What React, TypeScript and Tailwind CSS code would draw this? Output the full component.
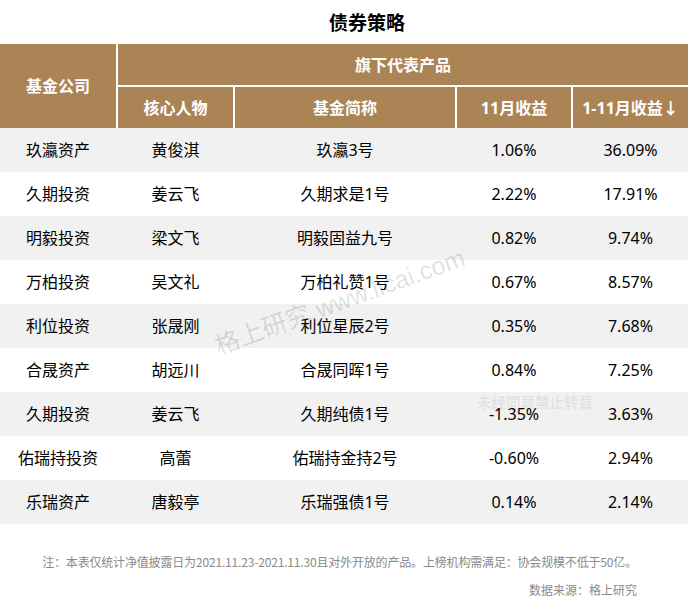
const rows = [
  ["玖瀛资产", "黄俊淇", "玖瀛3号", "1.06%", "36.09%"],
  ["久期投资", "姜云飞", "久期求是1号", "2.22%", "17.91%"],
  ["明毅投资", "梁文飞", "明毅固益九号", "0.82%", "9.74%"],
  ["万柏投资", "吴文礼", "万柏礼赞1号", "0.67%", "8.57%"],
  ["利位投资", "张晟刚", "利位星辰2号", "0.35%", "7.68%"],
  ["合晟资产", "胡远川", "合晟同晖1号", "0.84%", "7.25%"],
  ["久期投资", "姜云飞", "久期纯债1号", "-1.35%", "3.63%"],
  ["佑瑞持投资", "高蕾", "佑瑞持金持2号", "-0.60%", "2.94%"],
  ["乐瑞资产", "唐毅亭", "乐瑞强债1号", "0.14%", "2.14%"],
];

const cols = "grid grid-cols-[116px_115px_220px_114px_115px] gap-x-[2px]";

export default function App() {
  return (
    <div className="relative w-[690px] h-[613px] overflow-hidden bg-white text-black font-['Noto_Sans','Noto_Sans_CJK_SC',sans-serif]">
      <h1 className="flex h-[44px] items-center justify-center pl-[44px] text-[19px] font-bold font-['Noto_Sans_CJK_SC',sans-serif]">
        债券策略
      </h1>

      <div className="w-[688px]">
        {/* header */}
        <div className="grid grid-cols-[116px_115px_220px_114px_115px] grid-rows-[41px_41px] gap-[2px] text-[16px] font-bold text-white">
          <div className="row-span-2 flex items-center justify-center bg-[#ab8456]">基金公司</div>
          <div className="col-span-4 flex items-center justify-center bg-[#ab8456]">旗下代表产品</div>
          <div className="flex items-center justify-center bg-[#ab8456]">核心人物</div>
          <div className="flex items-center justify-center bg-[#ab8456]">基金简称</div>
          <div className="flex items-center justify-center bg-[#ab8456]">11月收益</div>
          <div className="flex items-center justify-center bg-[#ab8456]">1-11月收益↓</div>
        </div>

        {/* body */}
        {rows.map((r, i) => (
          <div
            key={i}
            className={`${cols} h-[44px] items-center text-[16px] text-center ${i % 2 === 0 ? "bg-[#f1f1f1]" : "bg-white"}`}
          >
            {r.map((c, j) => (
              <div key={j}>{c}</div>
            ))}
          </div>
        ))}
      </div>

      <div className="flex flex-col items-end pr-[53px] pt-[29px] text-[12px] text-[#8a8a8a] font-['Noto_Sans_CJK_SC',sans-serif]">
        <p className="h-[18px] leading-[18px] tracking-[-0.17px]">
          注：本表仅统计净值披露日为2021.11.23-2021.11.30且对外开放的产品。上榜机构需满足：协会规模不低于50亿。
        </p>
        <p className="mt-[10px] h-[18px] leading-[18px]">数据来源：格上研究</p>
      </div>

      {/* watermarks */}
      <div className="pointer-events-none absolute left-[340px] top-[302px] -translate-x-1/2 -translate-y-1/2 -rotate-[20deg] whitespace-nowrap text-[25px] text-black/[0.12] font-['Liberation_Sans','Noto_Sans_CJK_SC',sans-serif]">
        格上研究 www.licai.com
      </div>
      <div className="pointer-events-none absolute left-[477px] top-[391px] whitespace-nowrap text-[14.5px] font-bold text-black/[0.07] font-['Noto_Sans_CJK_SC',sans-serif]">
        未经同意禁止转载
      </div>
    </div>
  );
}
